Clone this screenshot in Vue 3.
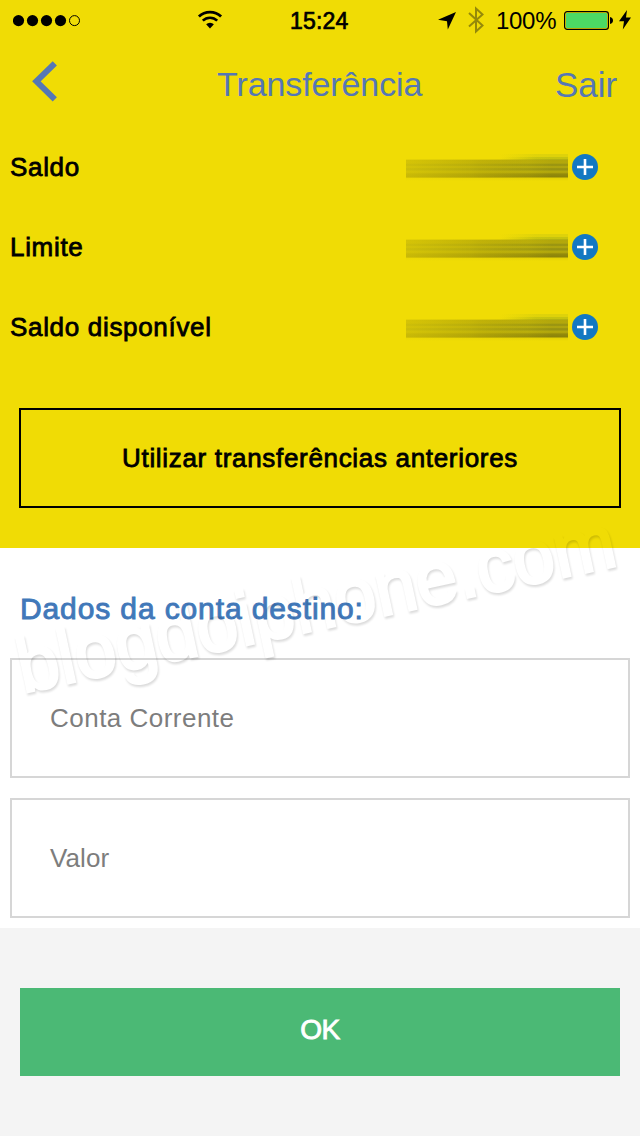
<script setup>
const balances = ['Saldo', 'Limite', 'Saldo disponível']
const fields = [
  { label: 'Conta Corrente', cls: 'account' },
  { label: 'Valor', cls: 'amount' },
]
</script>

<template>
  <div class="screen">
    <section class="top">
      <div class="status">
        <svg class="signal" width="70" height="14" viewBox="0 0 70 14">
          <circle v-for="n in 4" :key="n" :cx="n * 14 - 8.5" cy="6.6" r="5.6" />
          <circle cx="61.5" cy="6.6" r="5" fill="none" stroke="#000" stroke-width="1" />
        </svg>
        <svg class="wifi" width="26" height="20" viewBox="0 0 26 20">
          <path d="M1.9 6.6a15.8 15.8 0 0 1 22.2 0" fill="none" stroke="#000" stroke-width="2.8" />
          <path d="M5.8 10.7a10.2 10.2 0 0 1 14.4 0" fill="none" stroke="#000" stroke-width="2.6" />
          <path d="M9.1 14.3a5.6 5.6 0 0 1 7.8 0L13 18.4z" />
        </svg>
        <span class="time">15:24</span>
        <div class="indicators">
          <svg class="arrow" width="18" height="18" viewBox="0 0 18 18"><path d="M18 0L9.8 17.6 9 9.2 0 7.8z" /></svg>
          <svg class="bt" width="16" height="28" viewBox="0 0 16 28">
            <path d="M1 7L14.5 19.5 8 25.5V2.5L14.5 8.5 1 20.5" fill="none" stroke="#94890a" stroke-width="2" />
          </svg>
          <span class="percent">100%</span>
          <svg class="battery" width="50" height="20" viewBox="0 0 50 20">
            <rect x=".6" y=".6" width="43.8" height="17.8" rx="2.6" fill="none" stroke="#000" stroke-width="1.2" />
            <rect x="2" y="2" width="41" height="15" rx="1" fill="#4cd964" />
            <path d="M46 6q3 .6 3 3.5t-3 3.5z" />
          </svg>
          <svg class="bolt" width="12" height="20" viewBox="0 0 12 20"><path d="M8 0L0 11.2h5L3.8 19.5 12 7.6H7z" /></svg>
        </div>
      </div>

      <header class="nav">
        <svg class="back" width="26" height="42" viewBox="0 0 26 42">
          <path d="M22.8 2.3L4.4 20.3 22.8 38.4" fill="none" stroke="#5577b5" stroke-width="6" />
        </svg>
        <h1>Transferência</h1>
        <a class="exit">Sair</a>
      </header>

      <div class="balances">
        <div v-for="b in balances" :key="b" class="row">
          <span class="medium">{{ b }}</span>
          <span class="hidden-value"></span>
          <svg class="plus" width="26" height="26" viewBox="0 0 26 26">
            <circle cx="13" cy="13" r="13" fill="#1278c2" />
            <path d="M13 5v16M5 13h16" stroke="#fff" stroke-width="2.6" />
          </svg>
        </div>
      </div>

      <div class="previous medium">Utilizar transferências anteriores</div>
    </section>

    <section class="form">
      <h2>Dados da conta destino:</h2>
      <div v-for="f in fields" :key="f.label" class="field" :class="f.cls">{{ f.label }}</div>
    </section>

    <section class="bottom">
      <div class="ok">OK</div>
    </section>

    <svg class="watermark" width="640" height="1136" viewBox="0 0 640 1136">
      <filter id="emboss" x="-5%" y="-20%" width="110%" height="140%">
        <feOffset in="SourceAlpha" dx="1" dy="1.8" result="shifted" />
        <feGaussianBlur in="shifted" stdDeviation="1.3" result="soft" />
        <feComposite in="soft" in2="SourceAlpha" operator="out" />
      </filter>
      <g filter="url(#emboss)" opacity=".14">
        <text x="23" y="693" textLength="610" lengthAdjust="spacingAndGlyphs" transform="rotate(-12.1 23 693)">blogdoiphone.com</text>
      </g>
    </svg>
  </div>
</template>

<style>
body { margin: 0; }
</style>

<style scoped>
.screen {
  position: relative;
  width: 640px;
  height: 1136px;
  display: flex;
  flex-direction: column;
  background: #f4f4f4;
  font-family: "Liberation Sans", Arial, sans-serif;
  color: #000;
}
svg { display: block; flex: none; }
.top { height: 548px; background: #f0dc05; box-sizing: border-box; }
.status { height: 40px; display: flex; align-items: flex-start; padding-left: 13px; }
.signal { margin-top: 14px; }
.wifi { margin: 10px 0 0 114px; }
.time {
  margin-left: 67px;
  width: 62px;
  font-size: 23px;
  line-height: 42px;
  letter-spacing: .2px;
  -webkit-text-stroke: .7px #000;
}
.indicators { display: flex; margin-left: 86px; }
.arrow { margin-top: 12px; }
.bt { margin: 6px 0 0 12px; }
.percent { width: 64px; margin-left: 12px; font-size: 24px; line-height: 42px; letter-spacing: -.3px; }
.battery { margin: 11px 0 0 4px; }
.bolt { margin: 10px 0 0 5px; }
.nav { height: 87px; display: flex; color: #5577b5; }
.back { margin: 21px 0 0 32px; }
h1 { margin: 0 0 0 159px; width: 338px; font-size: 34px; font-weight: 400; line-height: 88px; letter-spacing: -.1px; }
.exit { font-size: 35px; line-height: 89px; }
.row { height: 80px; display: flex; align-items: center; padding-left: 10px; }
.medium { font-size: 26px; letter-spacing: .68px; -webkit-text-stroke: .8px #000; }
.hidden-value {
  width: 162px;
  height: 34px;
  margin-left: auto;
  background:
    linear-gradient(90deg, rgba(240, 220, 5, .65), rgba(240, 220, 5, .45) 40%, rgba(240, 220, 5, 0) 90%) 0 0 / 100% 100% no-repeat,
    linear-gradient(90deg, transparent 58%, rgba(120, 150, 30, .35) 80%, rgba(120, 150, 30, .35)) 0 7px / 100% 3px no-repeat,
    linear-gradient(90deg, transparent 58%, rgba(150, 170, 30, .2) 80%) 0 4px / 100% 3px no-repeat,
    linear-gradient(180deg, transparent 9px, rgba(85, 85, 20, .4) 10px, rgba(95, 95, 20, .42) 13px, rgba(70, 80, 30, .55) 15px, rgba(105, 105, 25, .42) 17px, rgba(70, 80, 30, .56) 19px, rgba(105, 105, 20, .42) 22px, rgba(75, 75, 15, .56) 24px, rgba(75, 75, 15, .62) 27px, rgba(150, 140, 0, .15) 28px, transparent 31px),
    linear-gradient(90deg, rgba(90, 75, 0, .2), rgba(110, 95, 0, .24) 45%, rgba(110, 95, 0, 0) 75%) 0 10px / 100% 18px no-repeat;
}
.plus { margin: 0 42px 0 4px; }
.previous {
  margin: 41px 19px 0;
  height: 100px;
  box-sizing: border-box;
  border: 2px solid #000;
  text-align: center;
  line-height: 97px;
}
.form { height: 380px; background: #fff; padding: 0 10px; display: flow-root; box-sizing: border-box; }
h2 {
  margin: 0 0 0 10px;
  height: 110px;
  font-size: 30px;
  font-weight: 400;
  line-height: 122px;
  letter-spacing: .88px;
  color: #4178b9;
  -webkit-text-stroke: .9px #4178b9;
}
.field {
  height: 120px;
  box-sizing: border-box;
  border: 2px solid #d6d6d6;
  margin-bottom: 20px;
  padding-left: 38px;
  font-size: 26px;
  line-height: 117px;
  color: #7d7d7d;
}
.account { letter-spacing: .48px; }
.amount { letter-spacing: .1px; }
.bottom { flex: 1; padding: 60px 20px; }
.ok {
  height: 88px;
  background: #4bb975;
  color: #fff;
  text-align: center;
  font-size: 28px;
  line-height: 84px;
  letter-spacing: -.4px;
  -webkit-text-stroke: .9px #fff;
}
.watermark { position: absolute; left: 0; top: 0; overflow: visible; pointer-events: none; }
.watermark text { font-family: "Liberation Sans", sans-serif; font-size: 76px; stroke: #000; stroke-width: 2.6px; }
</style>
